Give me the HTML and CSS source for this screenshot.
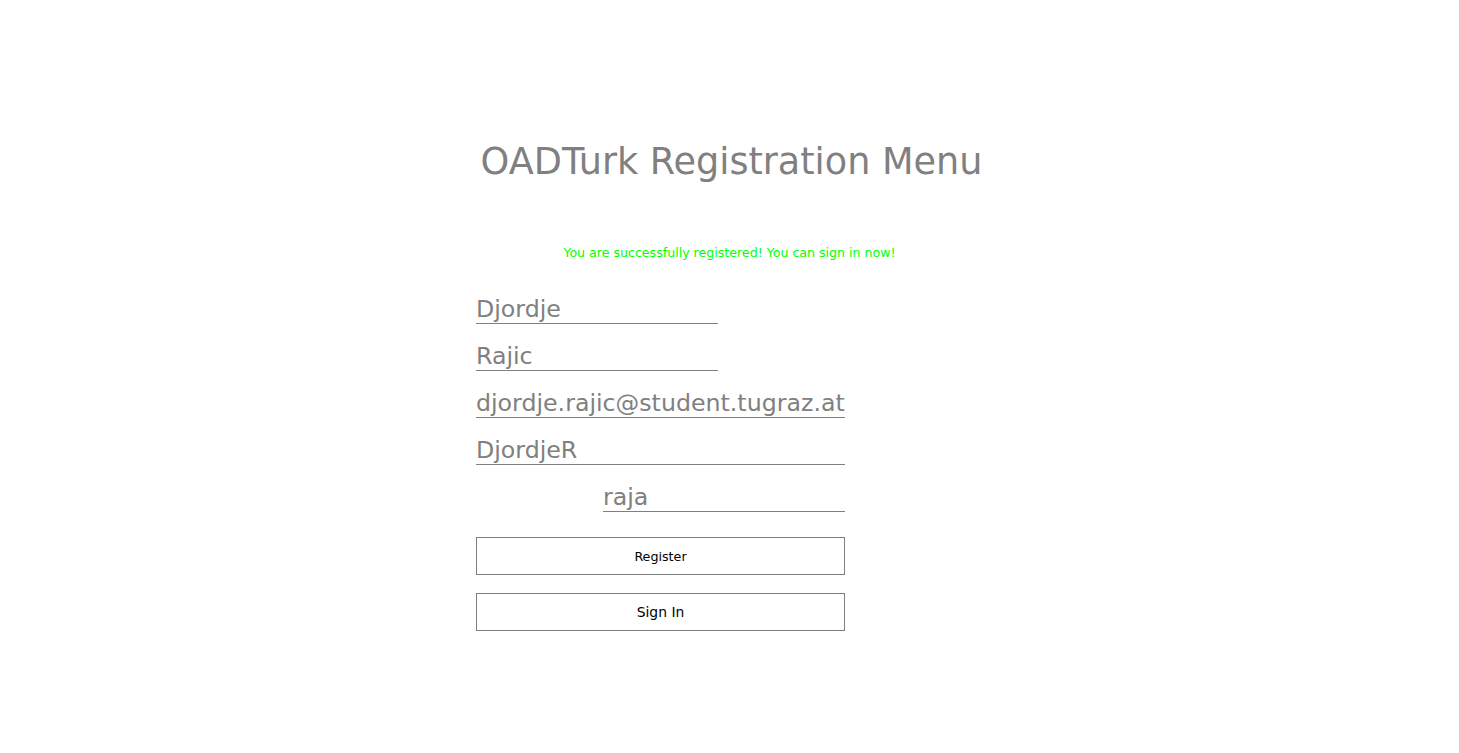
FILE: index.html
```html
<!DOCTYPE html>
<html>
<head>
<meta charset="utf-8">
<link rel="stylesheet" href="styles.css">
</head>
<body>
<div class="page">
  <h1 class="title">OADTurk Registration Menu</h1>
  <p class="message">You are successfully registered! You can sign in now!</p>
  <form class="form">
    <input class="field short" type="text" value="Djordje">
    <input class="field short" type="text" value="Rajic">
    <input class="field" type="text" value="djordje.rajic@student.tugraz.at">
    <input class="field" type="text" value="DjordjeR">
    <div class="row-right"><input class="field short" type="text" value="raja"></div>
    <button class="btn btn-register" type="button">Register</button>
    <button class="btn btn-signin" type="button">Sign In</button>
  </form>
</div>
</body>
</html>
```
FILE: styles.css
```css
html, body {
  margin: 0;
  padding: 0;
  background: #fff;
  font-family: "DejaVu Sans", Verdana, sans-serif;
}
.page {
  display: flex;
  flex-direction: column;
  padding-top: 140px;
}
.title {
  margin: 0;
  font-weight: normal;
  font-size: 36.6px;
  color: #808080;
  text-align: center;
  line-height: 44px;
  padding-left: 4px;
}
.message {
  margin: 61px 0 0 0;
  font-size: 12.6px;
  color: #00ff00;
  text-align: center;
  line-height: 16px;
}
.form {
  width: 369px;
  margin: 29px 0 0 476px;
  display: flex;
  flex-direction: column;
}
.field {
  box-sizing: border-box;
  width: 369px;
  height: 34px;
  margin: 0 0 13px 0;
  padding: 5px 0 0 0;
  border: none;
  border-bottom: 1px solid #808080;
  font-family: "DejaVu Sans", sans-serif;
  font-size: 23.7px;
  line-height: 27px;
  color: #808080;
  background: transparent;
  outline: none;
}
.field.short { width: 242px; }
.row-right { display: flex; justify-content: flex-end; }
.btn {
  box-sizing: border-box;
  width: 369px;
  height: 38px;
  border: 1px solid #808080;
  background: #fff;
  color: #000;
  font-family: "DejaVu Sans", sans-serif;
  padding: 0;
}
.btn-register { margin-top: 12px; font-size: 12.7px; }
.btn-signin { margin-top: 18px; font-size: 13.9px; }
```
